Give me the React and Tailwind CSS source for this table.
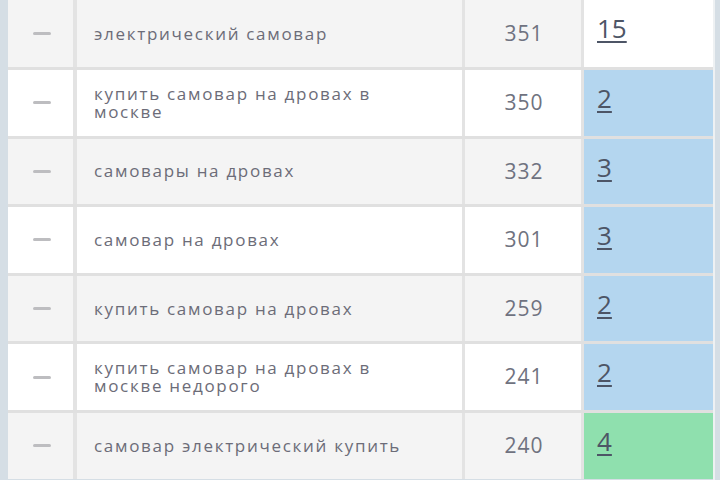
const rows = [
  { phrase: 'электрический самовар', freq: 351, pos: '15', tone: 'white' },
  { phrase: 'купить самовар на дровах в москве', freq: 350, pos: '2', tone: 'blue' },
  { phrase: 'самовары на дровах', freq: 332, pos: '3', tone: 'blue' },
  { phrase: 'самовар на дровах', freq: 301, pos: '3', tone: 'blue' },
  { phrase: 'купить самовар на дровах', freq: 259, pos: '2', tone: 'blue' },
  { phrase: 'купить самовар на дровах в москве недорого', freq: 241, pos: '2', tone: 'blue' },
  { phrase: 'самовар электрический купить', freq: 240, pos: '4', tone: 'green' },
]

const toneClass = {
  white: 'bg-white',
  blue: 'bg-[#b4d6ef]',
  green: 'bg-[#8fe0ae]',
}

function Row({ row, index }) {
  const striped = index % 2 === 0
  const bg = striped ? 'bg-[#f4f4f4]' : 'bg-white'
  return (
    <div
      className={`flex ${index === 0 ? 'h-[67px]' : 'h-[68.6px] border-t-[3px] border-[#e0e0e0]'}`}
    >
      <div className={`w-[65px] ${bg} flex items-center justify-center pl-[2px]`}>
        <div className="w-[18px] h-[3px] bg-[#bdbdc0] rounded-sm" />
      </div>
      <div className="w-[4px] bg-[#e3e3e3]" />
      <div className={`w-[385px] ${bg} flex items-center pl-[17px] pr-6`}>
        <span className="text-[17px] leading-[18px] tracking-[1.7px] text-[#6c6c78] w-[322px]">
          {row.phrase}
        </span>
      </div>
      <div className="w-[3px] bg-[#e3e3e3]" />
      <div className={`w-[116px] ${bg} flex items-center justify-center pl-[2px]`}>
        <span className="text-[21px] tracking-[1px] text-[#6f7280]">{row.freq}</span>
      </div>
      <div className="w-[3px] bg-[#e3e3e3]" />
      <div className={`flex-1 ${toneClass[row.tone]} flex items-start pl-[13px] pt-[13px]`}>
        <span className="text-[26px] leading-[30px] text-[#4d5566] underline underline-offset-[3px] decoration-[2px]">
          {row.pos}
        </span>
      </div>
    </div>
  )
}

export default function App() {
  return (
    <div
      className="w-[720px] h-[480px] overflow-hidden flex bg-[#d5dee5]"
      style={{ fontFamily: '"Open Sans", "Noto Sans", sans-serif' }}
    >
      <div className="w-[8px] bg-[#d5dee5]" />
      <div className="flex-1 flex flex-col border-r-[2px] border-[#eef1f3]">
        {rows.map((row, i) => (
          <Row key={i} row={row} index={i} />
        ))}
      </div>
      <div className="w-[5px] bg-[#d5dee5]" />
    </div>
  )
}
